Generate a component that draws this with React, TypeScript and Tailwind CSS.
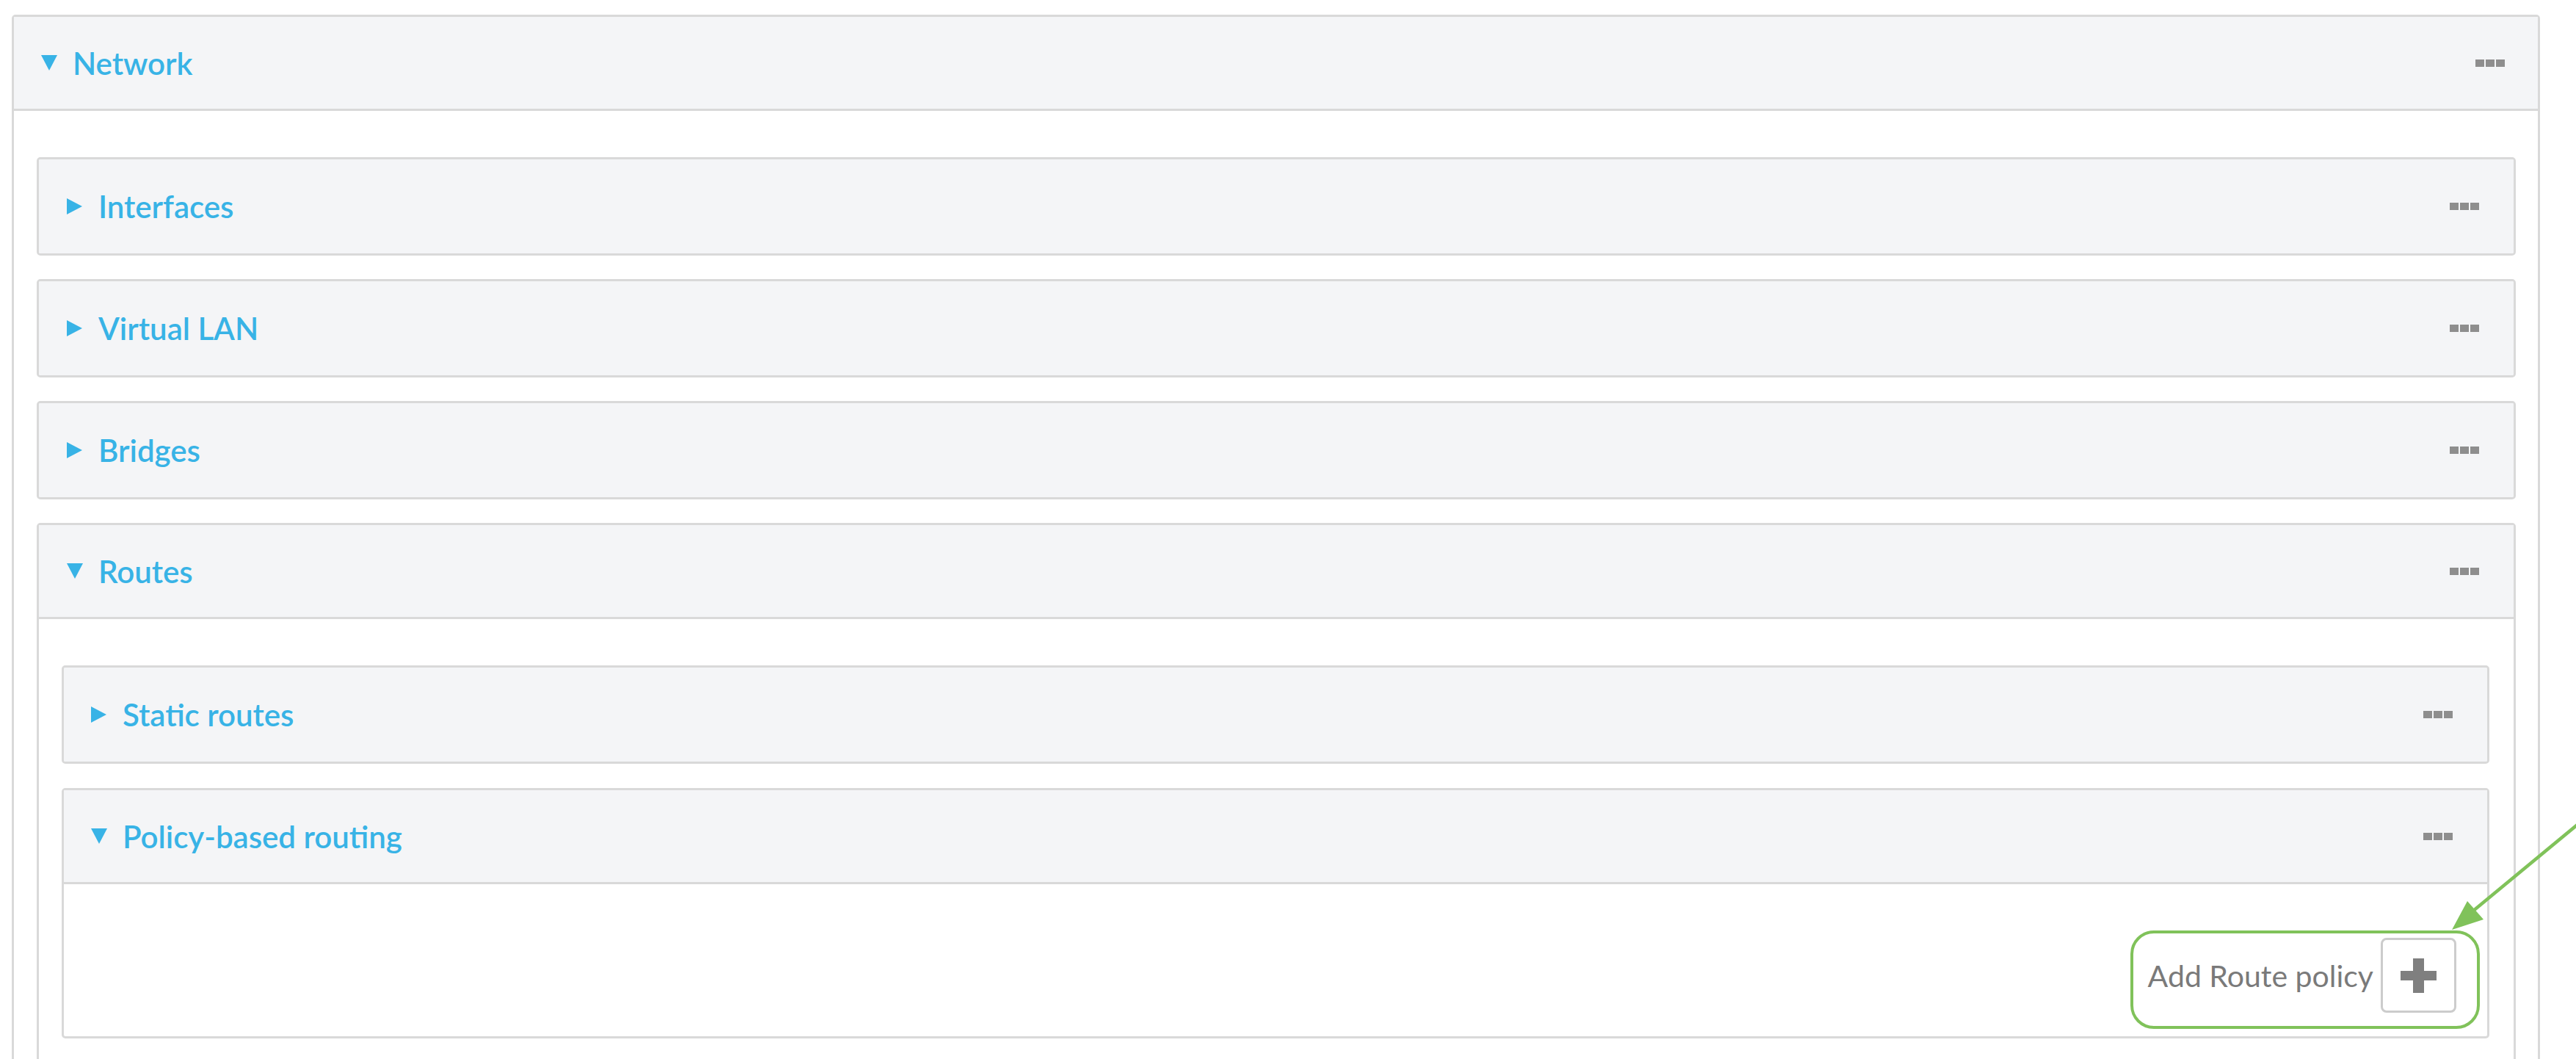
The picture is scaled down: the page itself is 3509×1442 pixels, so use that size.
import React from "react";

const FONT = { fontFamily: "Lato, 'Open Sans', sans-serif" };

function Dots() {
  return (
    <div className="flex gap-[2px]">
      <div className="w-[12px] h-[10px] bg-[#8e8e8e]" />
      <div className="w-[12px] h-[10px] bg-[#8e8e8e]" />
      <div className="w-[12px] h-[10px] bg-[#8e8e8e]" />
    </div>
  );
}

function Tri({ open }: { open: boolean }) {
  return open ? (
    <svg width="22" height="21" viewBox="0 0 22 21" className="shrink-0">
      <polygon points="0,0 22,0 11,21" fill="#38b3e6" />
    </svg>
  ) : (
    <svg width="22" height="22" viewBox="0 0 22 22" className="shrink-0">
      <polygon points="0,0 21,11 0,22" fill="#38b3e6" />
    </svg>
  );
}

function Header({
  title,
  open,
  pl,
  pr,
}: {
  title: string;
  open: boolean;
  pl: string;
  pr: string;
}) {
  return (
    <div
      className={`h-[128px] bg-[#f4f5f7] flex items-center justify-between ${pl} ${pr} ${
        open ? "border-b-[3px] border-[#d9d9d9]" : ""
      }`}
    >
      <div className="flex items-center gap-[21px]">
        <Tri open={open} />
        <span className="text-[42px] font-semibold text-[#38b3e6] leading-none" style={FONT}>
          {title}
        </span>
      </div>
      <Dots />
    </div>
  );
}

function Closed({ title, pl, pr }: { title: string; pl: string; pr: string }) {
  return (
    <div className="border-[3px] border-[#d9d9d9] rounded-[5px] overflow-hidden">
      <Header title={title} open={false} pl={pl} pr={pr} />
    </div>
  );
}

export default function App() {
  return (
    <div className="relative w-[3509px] h-[1442px] overflow-hidden bg-white pt-[20px] pl-[16px] pr-[49px]" style={FONT}>
      {/* Outer Network panel */}
      <div className="border-[3px] border-[#d9d9d9] rounded-[5px]">
        <Header title="Network" open={true} pl="pl-[37px]" pr="pr-[45px]" />
        <div className="pt-[63px] pl-[31px] pr-[30px] pb-[32px] flex flex-col gap-[32px]">
          <Closed title="Interfaces" pl="pl-[38px]" pr="pr-[47px]" />
          <Closed title="Virtual LAN" pl="pl-[38px]" pr="pr-[47px]" />
          <Closed title="Bridges" pl="pl-[38px]" pr="pr-[47px]" />

          {/* Routes */}
          <div className="border-[3px] border-[#d9d9d9] rounded-[5px]">
            <Header title="Routes" open={true} pl="pl-[38px]" pr="pr-[47px]" />
            <div className="pt-[63px] pl-[31px] pr-[33px] pb-[32px] flex flex-col gap-[33px]">
              <Closed title="Static routes" pl="pl-[37px]" pr="pr-[47px]" />

              <div className="border-[3px] border-[#d9d9d9] rounded-[5px]">
                <Header title="Policy-based routing" open={true} pl="pl-[37px]" pr="pr-[47px]" />
                <div className="h-[207px] flex items-end justify-end pr-[42px] pb-[32px]">
                  <div className="flex items-center gap-[10px]">
                    <span className="text-[41px] text-[#7a7a7a] leading-none" style={FONT}>
                      Add Route policy
                    </span>
                    <div className="w-[103px] h-[102px] border-[3px] border-[#cccccc] rounded-[8px] bg-white flex items-center justify-center">
                      <svg width="49" height="47" viewBox="0 0 49 47">
                        <rect x="17" y="0" width="15" height="47" fill="#7f7f7f" />
                        <rect x="0" y="17" width="49" height="13" fill="#7f7f7f" />
                      </svg>
                    </div>
                  </div>
                </div>
              </div>
            </div>
          </div>
        </div>
      </div>

      {/* Annotation: green highlight box */}
      <div className="absolute left-[2902px] top-[1267px] w-[476px] h-[134px] border-[4px] border-[#80c25a] rounded-[32px] pointer-events-none" />

      {/* Annotation: arrow */}
      <svg
        className="absolute left-0 top-0 pointer-events-none"
        width="3509"
        height="1442"
        viewBox="0 0 3509 1442"
      >
        <line x1="3512" y1="1122" x2="3362" y2="1246" stroke="#80c25a" strokeWidth="4.5" />
        <polygon points="3340,1266 3361,1227 3383,1252" fill="#80c25a" />
      </svg>
    </div>
  );
}
